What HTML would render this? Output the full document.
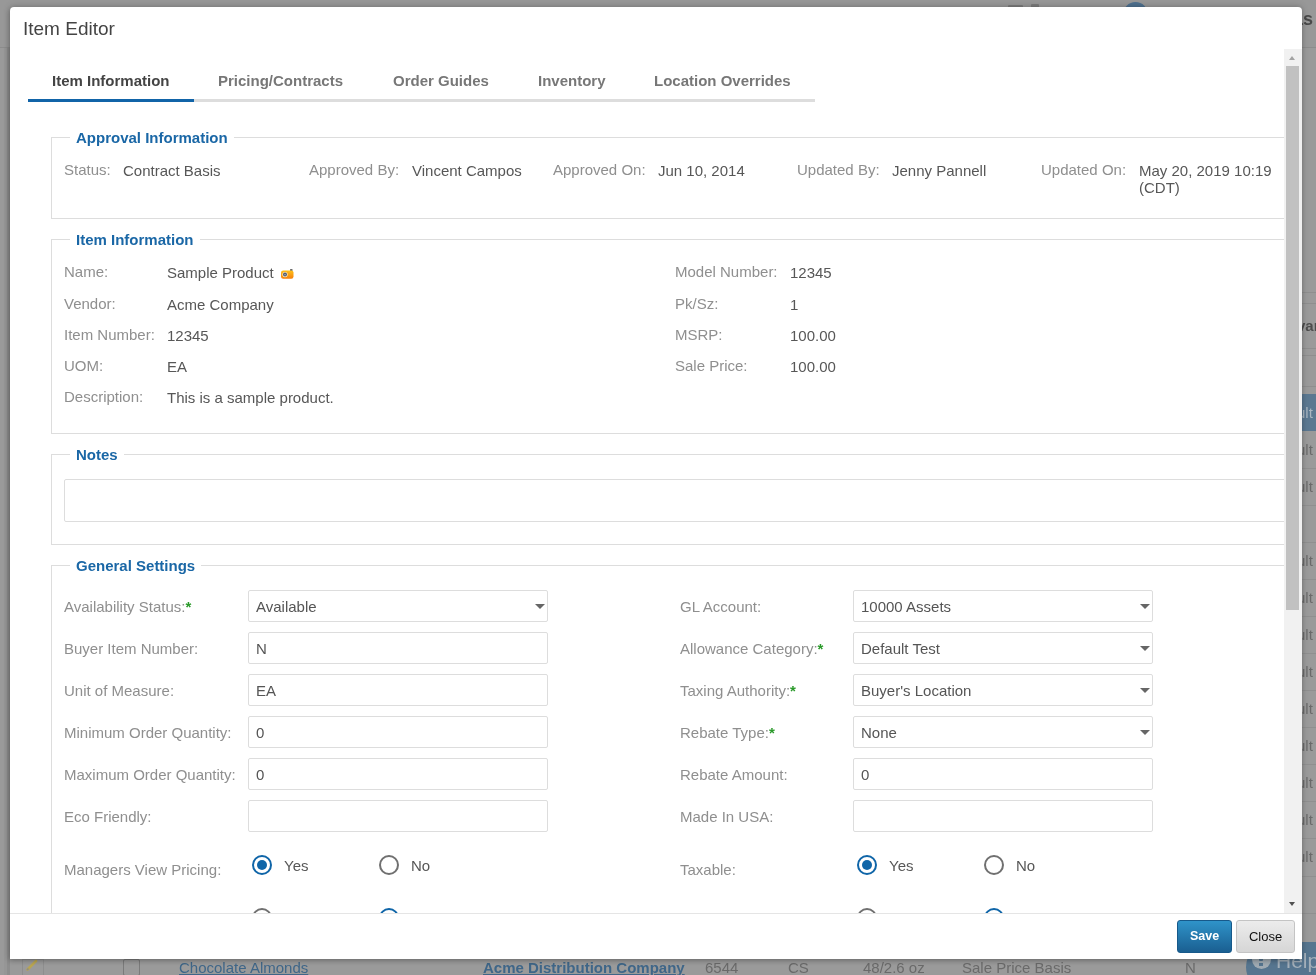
<!DOCTYPE html>
<html><head><meta charset="utf-8">
<style>
html,body{margin:0;padding:0;}
body{width:1316px;height:975px;overflow:hidden;position:relative;background:#9a9a9a;font-family:"Liberation Sans",sans-serif;}
#root{position:absolute;left:0;top:0;width:1316px;height:975px;background:#9a9a9a;will-change:transform;overflow:hidden;}
.a{position:absolute;white-space:nowrap;}
#modal{position:absolute;left:10px;top:7px;width:1292px;height:952px;background:#fff;border-radius:4px 4px 0 0;box-shadow:-1px 2px 5px rgba(0,0,0,.22),0 -1px 7px rgba(0,0,0,.18);}
#clip{position:absolute;left:0;top:0;width:1316px;height:975px;clip-path:inset(49px 32px 62px 10px);}
.lbl{color:#8f8f8f;font-size:15px;line-height:17px;}
.val{color:#575757;font-size:15px;line-height:17px;}
.fs{position:absolute;border:1px solid #ddd;}
.lg{position:absolute;background:#fff;padding:0 6px;color:#1a67a6;font-weight:bold;font-size:15px;line-height:17px;white-space:nowrap;}
.tab{position:absolute;top:72px;font-weight:bold;font-size:15px;line-height:17px;color:#777;white-space:nowrap;}
.inp{position:absolute;width:298px;height:30px;border:1px solid #ddd;border-radius:2px;background:#fff;}
.inp span{position:absolute;left:7px;top:7px;font-size:15px;line-height:17px;color:#555;white-space:nowrap;}
.sel:after{content:"";position:absolute;right:2px;top:13px;border-left:5px solid transparent;border-right:5px solid transparent;border-top:5px solid #666;}
.req{color:#2a9a2a;font-weight:bold;}
.rad{position:absolute;width:16px;height:16px;border:2px solid #707070;border-radius:50%;box-sizing:content-box;background:#fff;}
.rad.on{border-color:#0f65a8;}
.rad.on:after{content:"";position:absolute;left:3px;top:3px;width:10px;height:10px;border-radius:50%;background:#0f65a8;}
.btn{position:absolute;top:920px;height:33px;box-sizing:border-box;border-radius:3px;font-size:14px;line-height:31px;text-align:center;font-weight:bold;}
</style></head>
<body>
<div id="root">
<div class="a" style="left:0;top:0;width:1316px;height:47px;background:#989898"></div>
<div class="a" style="left:0;top:47px;width:1316px;height:1px;background:#8c8c8c"></div>
<div class="a" style="left:1008px;top:5px;width:15px;height:4px;background:#7c7c7c;border-radius:1px"></div>
<div class="a" style="left:1031px;top:4px;width:8px;height:5px;background:#7c7c7c;border-radius:1px"></div>
<div class="a" style="left:1123px;top:2px;width:25px;height:25px;background:#4f7190;border-radius:50%"></div>
<div class="a" style="left:1293px;top:9px;font-size:18px;line-height:20px;font-weight:bold;color:#4a4a4a">as</div>
<div class="a" style="left:7px;top:90px;width:8px;height:32px;background:#56728a;border-radius:3px"></div>
<div class="a" style="left:7px;top:72px;font-size:13px;line-height:14px;font-weight:bold;color:#5a5a5a">A</div>
<!-- right strip table -->
<div class="a" style="left:1302px;top:292px;width:14px;height:1px;background:#8e8e8e"></div>
<div class="a" style="left:1302px;top:303px;width:14px;height:1px;background:#8e8e8e"></div>
<div class="a" style="left:1297px;top:317px;font-size:15px;line-height:17px;font-weight:bold;color:#4d4d4d">var</div>
<div class="a" style="left:1302px;top:348px;width:14px;height:1px;background:#8e8e8e"></div>
<div class="a" style="left:1302px;top:355px;width:14px;height:1px;background:#8e8e8e"></div>
<div class="a" style="left:1302px;top:386px;width:14px;height:1px;background:#8e8e8e"></div>
<div class="a" style="left:1302px;top:394px;width:14px;height:37px;background:#5b7891"></div>
<div class="a" style="left:1297px;top:404px;font-size:15px;line-height:17px;color:#a9b6c0">ult</div>
<div class="a" style="left:1302px;top:468px;width:14px;height:1px;background:#8f8f8f"></div>
<div class="a" style="left:1302px;top:505px;width:14px;height:1px;background:#8f8f8f"></div>
<div class="a" style="left:1302px;top:542px;width:14px;height:1px;background:#8f8f8f"></div>
<div class="a" style="left:1302px;top:579px;width:14px;height:1px;background:#8f8f8f"></div>
<div class="a" style="left:1302px;top:616px;width:14px;height:1px;background:#8f8f8f"></div>
<div class="a" style="left:1302px;top:653px;width:14px;height:1px;background:#8f8f8f"></div>
<div class="a" style="left:1302px;top:690px;width:14px;height:1px;background:#8f8f8f"></div>
<div class="a" style="left:1302px;top:727px;width:14px;height:1px;background:#8f8f8f"></div>
<div class="a" style="left:1302px;top:764px;width:14px;height:1px;background:#8f8f8f"></div>
<div class="a" style="left:1302px;top:801px;width:14px;height:1px;background:#8f8f8f"></div>
<div class="a" style="left:1302px;top:838px;width:14px;height:1px;background:#8f8f8f"></div>
<div class="a" style="left:1302px;top:876px;width:14px;height:1px;background:#8f8f8f"></div>
<div class="a" style="left:1302px;top:913px;width:14px;height:1px;background:#8f8f8f"></div>
<div class="a" style="left:1302px;top:950px;width:14px;height:1px;background:#8f8f8f"></div>
<div class="a" style="left:1297px;top:441px;font-size:15px;line-height:17px;color:#6a6a6a">ult</div>
<div class="a" style="left:1297px;top:478px;font-size:15px;line-height:17px;color:#6a6a6a">ult</div>
<div class="a" style="left:1297px;top:552px;font-size:15px;line-height:17px;color:#6a6a6a">ult</div>
<div class="a" style="left:1297px;top:589px;font-size:15px;line-height:17px;color:#6a6a6a">ult</div>
<div class="a" style="left:1297px;top:626px;font-size:15px;line-height:17px;color:#6a6a6a">ult</div>
<div class="a" style="left:1297px;top:663px;font-size:15px;line-height:17px;color:#6a6a6a">ult</div>
<div class="a" style="left:1297px;top:700px;font-size:15px;line-height:17px;color:#6a6a6a">ult</div>
<div class="a" style="left:1297px;top:737px;font-size:15px;line-height:17px;color:#6a6a6a">ult</div>
<div class="a" style="left:1297px;top:774px;font-size:15px;line-height:17px;color:#6a6a6a">ult</div>
<div class="a" style="left:1297px;top:811px;font-size:15px;line-height:17px;color:#6a6a6a">ult</div>
<div class="a" style="left:1297px;top:848px;font-size:15px;line-height:17px;color:#6a6a6a">ult</div>
<div class="a" style="left:0;top:958px;width:1316px;height:17px;background:#9a9a9a"></div>
<div class="a" style="left:7px;top:940px;width:1px;height:35px;background:#8f8f8f"></div>
<div class="a" style="left:22px;top:959px;width:22px;height:16px;border:1px solid #8e8e8e;border-bottom:none;box-sizing:border-box"></div>
<svg class="a" style="left:26px;top:959px" width="12" height="12" viewBox="0 0 12 12"><path d="M1.5 10.5 L10 2" stroke="#b8a552" stroke-width="2.6" stroke-linecap="round"/><path d="M1 11 L2.5 9.5" stroke="#8a8a8a" stroke-width="1.4"/></svg>
<div class="a" style="left:123px;top:959px;width:17px;height:17px;border:1px solid #7a7a7a;border-radius:2px;box-sizing:border-box"></div>
<div class="a" style="left:179px;top:959px;font-size:15px;line-height:17px;color:#3f6688;text-decoration:underline">Chocolate Almonds</div>
<div class="a" style="left:483px;top:959px;font-size:15px;line-height:17px;font-weight:bold;color:#3f6688;text-decoration:underline">Acme Distribution Company</div>
<div class="a" style="left:705px;top:959px;font-size:15px;line-height:17px;color:#6a6a6a">6544</div>
<div class="a" style="left:788px;top:959px;font-size:15px;line-height:17px;color:#6a6a6a">CS</div>
<div class="a" style="left:863px;top:959px;font-size:15px;line-height:17px;color:#6a6a6a">48/2.6 oz</div>
<div class="a" style="left:962px;top:959px;font-size:15px;line-height:17px;color:#6a6a6a">Sale Price Basis</div>
<div class="a" style="left:1185px;top:959px;font-size:15px;line-height:17px;color:#6a6a6a">N</div>
<div class="a" style="left:1246px;top:942px;width:110px;height:50px;border-radius:25px;background:#56758f"></div>
<div class="a" style="left:1252px;top:950px;width:19px;height:19px;border-radius:50%;background:#a0aab2"></div>
<div class="a" style="left:1259px;top:953px;width:4px;height:8px;background:#56758f;border-radius:1px"></div>
<div class="a" style="left:1259px;top:963px;width:4px;height:3px;background:#56758f"></div>
<div class="a" style="left:1276px;top:950px;font-size:21px;line-height:22px;color:#a3afb9">Help</div>
<div class="a" style="left:7px;top:48px;width:3px;height:927px;background:#8d8d8d"></div>
<div class="a" style="left:4px;top:48px;width:3px;height:927px;background:#969696"></div>

<div id="modal"></div>
<div class="a" style="left:23px;top:18px;font-size:19px;line-height:22px;color:#444">Item Editor</div>
<div id="clip">
  <div class="a" style="left:28px;top:99px;width:787px;height:3px;background:#ddd"></div>
  <div class="a" style="left:28px;top:99px;width:166px;height:3px;background:#1164a8"></div>
  <div class="tab" style="left:52px;color:#444">Item Information</div>
  <div class="tab" style="left:218px">Pricing/Contracts</div>
  <div class="tab" style="left:393px">Order Guides</div>
  <div class="tab" style="left:538px">Inventory</div>
  <div class="tab" style="left:654px">Location Overrides</div>
<div class="fs" style="left:51px;top:137px;width:1300px;height:80px"></div>
<div class="lg" style="left:70px;top:129px">Approval Information</div>
<div class="a lbl" style="left:64px;top:161px">Status:</div>
<div class="a val" style="left:123px;top:162px">Contract Basis</div>
<div class="a lbl" style="left:309px;top:161px">Approved By:</div>
<div class="a val" style="left:412px;top:162px">Vincent Campos</div>
<div class="a lbl" style="left:553px;top:161px">Approved On:</div>
<div class="a val" style="left:658px;top:162px">Jun 10, 2014</div>
<div class="a lbl" style="left:797px;top:161px">Updated By:</div>
<div class="a val" style="left:892px;top:162px">Jenny Pannell</div>
<div class="a lbl" style="left:1041px;top:161px">Updated On:</div>
<div class="a val" style="left:1139px;top:162px">May 20, 2019 10:19</div>
<div class="a val" style="left:1139px;top:179px">(CDT)</div>
<div class="fs" style="left:51px;top:239px;width:1300px;height:193px"></div>
<div class="lg" style="left:70px;top:231px">Item Information</div>
<div class="a lbl" style="left:64px;top:263px">Name:</div>
<div class="a val" style="left:167px;top:264px">Sample Product</div>
<div class="a lbl" style="left:64px;top:295px">Vendor:</div>
<div class="a val" style="left:167px;top:296px">Acme Company</div>
<div class="a lbl" style="left:64px;top:326px">Item Number:</div>
<div class="a val" style="left:167px;top:327px">12345</div>
<div class="a lbl" style="left:64px;top:357px">UOM:</div>
<div class="a val" style="left:167px;top:358px">EA</div>
<div class="a lbl" style="left:64px;top:388px">Description:</div>
<div class="a val" style="left:167px;top:389px">This is a sample product.</div>
<div class="a lbl" style="left:675px;top:263px">Model Number:</div>
<div class="a val" style="left:790px;top:264px">12345</div>
<div class="a lbl" style="left:675px;top:295px">Pk/Sz:</div>
<div class="a val" style="left:790px;top:296px">1</div>
<div class="a lbl" style="left:675px;top:326px">MSRP:</div>
<div class="a val" style="left:790px;top:327px">100.00</div>
<div class="a lbl" style="left:675px;top:357px">Sale Price:</div>
<div class="a val" style="left:790px;top:358px">100.00</div>
<svg class="a" style="left:280px;top:268px" width="15" height="12" viewBox="0 0 15 12">
<defs><linearGradient id="cg" x1="0" y1="0" x2="0" y2="1"><stop offset="0" stop-color="#ffc21a"/><stop offset="1" stop-color="#f57f0c"/></linearGradient></defs>
<rect x="10" y="1" width="2.5" height="2" rx="0.6" fill="#6b6b6b"/>
<rect x="1" y="2.4" width="12.5" height="8.4" rx="2.2" fill="url(#cg)"/>
<circle cx="5" cy="6.6" r="2.6" fill="#fff3d0"/>
<circle cx="5" cy="6.6" r="2.0" fill="#4d5566"/>
<circle cx="5" cy="6.6" r="0.9" fill="#9aa3b3"/>
</svg>
<div class="fs" style="left:51px;top:454px;width:1300px;height:89px"></div>
<div class="lg" style="left:70px;top:446px">Notes</div>
<div class="a" style="left:64px;top:479px;width:1300px;height:41px;border:1px solid #ddd;border-radius:2px"></div>
<div class="fs" style="left:51px;top:565px;width:1300px;height:500px"></div>
<div class="lg" style="left:70px;top:557px">General Settings</div>
<div class="a lbl" style="left:64px;top:598px">Availability Status:<span class="req">*</span></div>
<div class="inp sel" style="left:248px;top:590px"><span>Available</span></div>
<div class="a lbl" style="left:680px;top:598px">GL Account:</div>
<div class="inp sel" style="left:853px;top:590px"><span>10000 Assets</span></div>
<div class="a lbl" style="left:64px;top:640px">Buyer Item Number:</div>
<div class="inp" style="left:248px;top:632px"><span>N</span></div>
<div class="a lbl" style="left:680px;top:640px">Allowance Category:<span class="req">*</span></div>
<div class="inp sel" style="left:853px;top:632px"><span>Default Test</span></div>
<div class="a lbl" style="left:64px;top:682px">Unit of Measure:</div>
<div class="inp" style="left:248px;top:674px"><span>EA</span></div>
<div class="a lbl" style="left:680px;top:682px">Taxing Authority:<span class="req">*</span></div>
<div class="inp sel" style="left:853px;top:674px"><span>Buyer's Location</span></div>
<div class="a lbl" style="left:64px;top:724px">Minimum Order Quantity:</div>
<div class="inp" style="left:248px;top:716px"><span>0</span></div>
<div class="a lbl" style="left:680px;top:724px">Rebate Type:<span class="req">*</span></div>
<div class="inp sel" style="left:853px;top:716px"><span>None</span></div>
<div class="a lbl" style="left:64px;top:766px">Maximum Order Quantity:</div>
<div class="inp" style="left:248px;top:758px"><span>0</span></div>
<div class="a lbl" style="left:680px;top:766px">Rebate Amount:</div>
<div class="inp" style="left:853px;top:758px"><span>0</span></div>
<div class="a lbl" style="left:64px;top:808px">Eco Friendly:</div>
<div class="inp" style="left:248px;top:800px"><span></span></div>
<div class="a lbl" style="left:680px;top:808px">Made In USA:</div>
<div class="inp" style="left:853px;top:800px"><span></span></div>
<div class="a lbl" style="left:64px;top:861px">Managers View Pricing:</div>
<div class="rad on" style="left:252px;top:855px"></div>
<div class="rad" style="left:379px;top:855px"></div>
<div class="a val" style="left:284px;top:857px">Yes</div>
<div class="a val" style="left:411px;top:857px">No</div>
<div class="a lbl" style="left:680px;top:861px">Taxable:</div>
<div class="rad on" style="left:857px;top:855px"></div>
<div class="rad" style="left:984px;top:855px"></div>
<div class="a val" style="left:889px;top:857px">Yes</div>
<div class="a val" style="left:1016px;top:857px">No</div>
<div class="rad" style="left:252px;top:908px"></div>
<div class="rad on" style="left:379px;top:908px"></div>
<div class="rad" style="left:857px;top:908px"></div>
<div class="rad on" style="left:984px;top:908px"></div>
</div>
<div class="a" style="left:1284px;top:49px;width:18px;height:864px;background:#f1f1f1"></div>
<div class="a" style="left:1286px;top:66px;width:13px;height:544px;background:#c1c1c1"></div>
<div class="a" style="left:1289px;top:56px;width:0;height:0;border-left:3.5px solid transparent;border-right:3.5px solid transparent;border-bottom:4px solid #a3a3a3"></div>
<div class="a" style="left:1289px;top:902px;width:0;height:0;border-left:3.5px solid transparent;border-right:3.5px solid transparent;border-top:4px solid #505050"></div>
<div class="a" style="left:10px;top:913px;width:1292px;height:1px;background:#e5e5e5"></div>
<div class="btn" style="left:1177px;width:55px;color:#fff;font-size:12.5px;background:linear-gradient(#2f93c9,#1a5f91);border:1px solid #17598a;">Save</div>
<div class="btn" style="left:1236px;width:59px;color:#111;font-weight:normal;font-size:13px;background:linear-gradient(#ececec,#d6d6d6);border:1px solid #c4c4c4;">Close</div>
</div>
</body></html>
